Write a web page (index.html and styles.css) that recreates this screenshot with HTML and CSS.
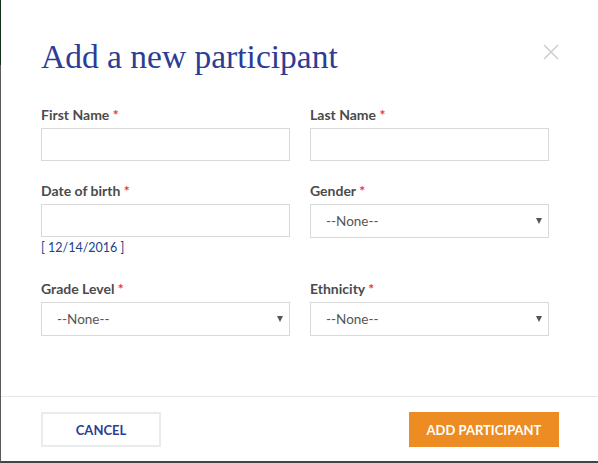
FILE: index.html
```html
<!DOCTYPE html>
<html>
<head>
<meta charset="utf-8">
<link rel="stylesheet" href="styles.css">
</head>
<body>
<div class="modal">
  <div class="header">
    <h1 class="title">Add a new participant</h1>
    <span class="close">
      <svg width="16" height="16" viewBox="0 0 16 16"><path d="M1 1L15 15M15 1L1 15" stroke="#cfcfcf" stroke-width="1.6" fill="none"/></svg>
    </span>
  </div>
  <div class="form">
    <div class="field">
      <label class="label">First Name <span class="req">*</span></label>
      <div class="input"></div>
    </div>
    <div class="field">
      <label class="label">Last Name <span class="req">*</span></label>
      <div class="input"></div>
    </div>
    <div class="field">
      <label class="label">Date of birth <span class="req">*</span></label>
      <div class="input"></div>
      <div class="hint">[ 12/14/2016 ]</div>
    </div>
    <div class="field">
      <label class="label">Gender <span class="req">*</span></label>
      <div class="select"><span>--None--</span><span class="caret"></span></div>
    </div>
    <div class="field">
      <label class="label">Grade Level <span class="req">*</span></label>
      <div class="select"><span>--None--</span><span class="caret"></span></div>
    </div>
    <div class="field">
      <label class="label">Ethnicity <span class="req">*</span></label>
      <div class="select"><span>--None--</span><span class="caret"></span></div>
    </div>
  </div>
  <div class="footer">
    <button class="btn btn-cancel">CANCEL</button>
    <button class="btn btn-add">ADD PARTICIPANT</button>
  </div>
</div>
</body>
</html>
```
FILE: styles.css
```css
html, body {
  margin: 0;
  padding: 0;
  background: #ffffff;
}
body {
  width: 598px;
  height: 463px;
  font-family: "Lato", "Liberation Sans", sans-serif;
}
.modal {
  box-sizing: border-box;
  width: 598px;
  height: 463px;
  border-left: 1px solid #5a5a5a;
  border-bottom: 2px solid #444444;
  display: flex;
  flex-direction: column;
  position: relative;
}
.modal::before {
  content: "";
  position: absolute;
  left: -1px;
  top: 0;
  width: 1px;
  height: 65px;
  background: #10301c;
}
.header {
  display: flex;
  justify-content: space-between;
  align-items: flex-start;
  padding: 36px 39px 0 40px;
}
.title {
  margin: 0;
  font-family: "Liberation Serif", serif;
  font-weight: normal;
  font-size: 33.5px;
  line-height: 42px;
  color: #2b3d94;
}
.close {
  margin-top: 8px;
  width: 16px;
  height: 16px;
  display: block;
}
.close svg { display: block; }
.form {
  display: grid;
  grid-template-columns: 249px 239px;
  column-gap: 20px;
  row-gap: 22px;
  padding: 29px 0 0 40px;
  align-items: start;
}
.field {
  display: flex;
  flex-direction: column;
}
.label {
  font-size: 14px;
  font-weight: bold;
  color: #4b4b4b;
  line-height: 16px;
  margin-bottom: 5px;
}
.req { color: #e53935; }
.input {
  box-sizing: border-box;
  height: 33px;
  border: 1px solid #d9d9d9;
}
.select {
  box-sizing: border-box;
  height: 34px;
  border: 1px solid #d9d9d9;
  display: flex;
  align-items: center;
  justify-content: space-between;
  padding: 0 6px 0 15px;
  font-size: 13.5px;
  color: #555555;
}
.caret {
  width: 0;
  height: 0;
  border-left: 3px solid transparent;
  border-right: 3px solid transparent;
  border-top: 6px solid #555555;
}
.hint {
  margin-top: 2px;
  margin-bottom: 2px;
  font-size: 12.5px;
  color: #1c3f8e;
  line-height: 18px;
}
.footer {
  margin-top: auto;
  border-top: 1px solid #e6e6e6;
  display: flex;
  justify-content: space-between;
  padding: 15px 39px 14px 40px;
}
.btn {
  box-sizing: border-box;
  height: 35px;
  font-family: "Lato", "Liberation Sans", sans-serif;
  font-size: 13px;
  font-weight: bold;
  border-radius: 0;
  cursor: pointer;
}
.btn-cancel {
  width: 120px;
  background: #ffffff;
  border: 2px solid #e7ecec;
  color: #2b3d94;
}
.btn-add {
  width: 150px;
  background: #ec8c22;
  border: none;
  color: #ffffff;
}
```
